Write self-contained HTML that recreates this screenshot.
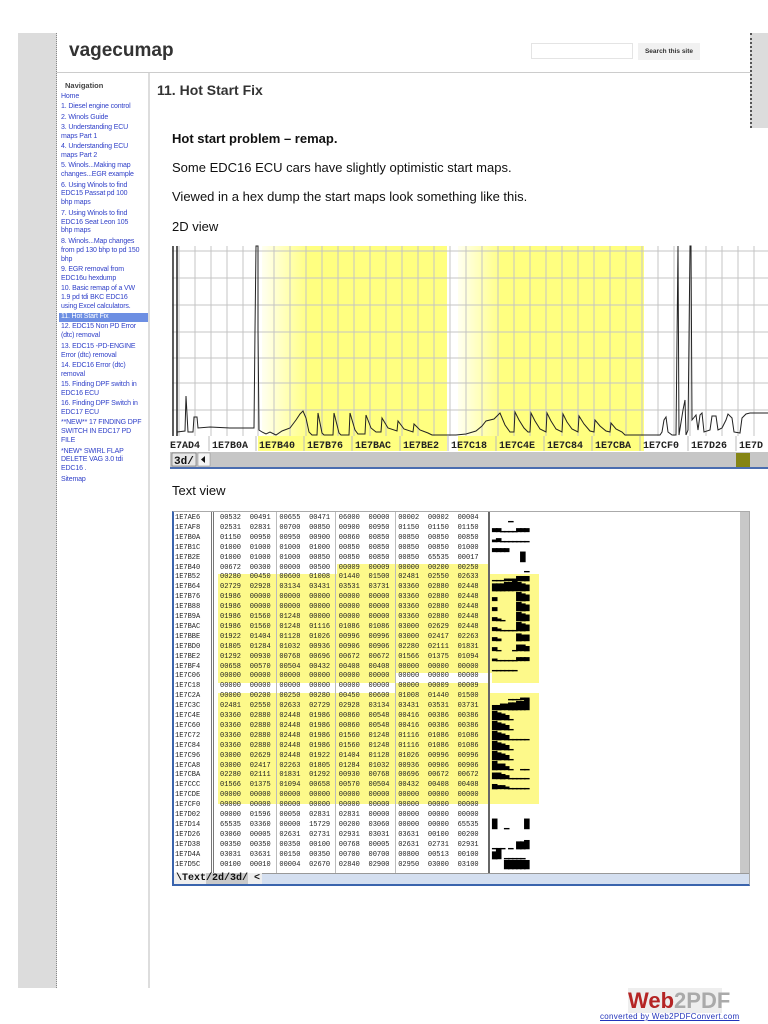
<!DOCTYPE html>
<html><head><meta charset="utf-8"><style>
*{margin:0;padding:0;box-sizing:border-box}
body{width:768px;height:1024px;background:#fff;position:relative;overflow:hidden;font-family:"Liberation Sans",sans-serif}
.abs{position:absolute}
#lg{left:18px;top:33px;width:39px;height:955px;background:#dcdcdc;border-right:1px dotted #888}
#rg{left:750px;top:33px;width:18px;height:95px;background:#dcdcdc;border-left:2px dotted #555}
#title{left:69px;top:40px;font-size:19px;font-weight:bold;color:#333}
#hline{left:57px;top:72px;width:693px;height:1px;background:#ccc}
#sbox{left:531px;top:43px;width:102px;height:16px;border:1px solid #e4e4e4;background:#fff}
#sbtn{left:638px;top:43px;width:62px;height:17px;background:#f1f1f1;font-size:6.5px;font-weight:bold;color:#333;text-align:center;line-height:17px}
#vline{left:148px;top:73px;width:2px;height:915px;background:#ddd}
#nav{left:61px;top:81px;width:87px;font-size:7px;color:#2f3fc8;letter-spacing:-0.15px}
#nav .h{color:#444;font-weight:bold;font-size:7.5px;margin-bottom:3px;padding-left:4px;letter-spacing:0}
#nav div.i{line-height:8.9px;margin-bottom:1.4px;white-space:nowrap}
#nav div.sel{background:#6d8fe3;color:#fff;margin-left:-2px;padding-left:2px}
h1{position:absolute;left:157px;top:82px;font-size:14px;color:#333;font-weight:bold}
.p{position:absolute;left:172px;font-size:13px;color:#111;white-space:nowrap}
#tv{left:172px;top:511px;width:578px;height:375px;border:1px solid #aaa;border-bottom:2px solid #3a64ad;border-left:2px solid #3a64ad;background:#fff;overflow:hidden}
.r{position:absolute;left:0;height:9.9px;width:570px;font-family:"Liberation Mono",monospace;font-size:7px;line-height:9.9px;color:#222}
.r span{position:absolute}
.a{left:1px}
.m{left:318px;font-family:"DejaVu Sans Mono",monospace;font-size:9px;letter-spacing:-1.4px;color:#000;white-space:pre}
.y{position:absolute;background:#fdf98a}
</style></head><body>
<div class="abs" id="lg"></div>
<div class="abs" id="rg"></div>
<div class="abs" id="title">vagecumap</div>
<div class="abs" id="hline"></div>
<div class="abs" id="sbox"></div>
<div class="abs" id="sbtn">Search this site</div>
<div class="abs" id="vline"></div>
<div class="abs" id="nav">
<div class="h">Navigation</div>
<div class="i">Home</div>
<div class="i">1. Diesel engine control</div>
<div class="i">2. Winols Guide</div>
<div class="i">3. Understanding ECU<br>maps Part 1</div>
<div class="i">4. Understanding ECU<br>maps Part 2</div>
<div class="i">5. Winols...Making map<br>changes...EGR example</div>
<div class="i">6. Using Winols to find<br>EDC15 Passat pd 100<br>bhp maps</div>
<div class="i">7. Using Winols to find<br>EDC16 Seat Leon 105<br>bhp maps</div>
<div class="i">8. Winols...Map changes<br>from pd 130 bhp to pd 150<br>bhp</div>
<div class="i">9. EGR removal from<br>EDC16u hexdump</div>
<div class="i">10. Basic remap of a VW<br>1.9 pd tdi BKC EDC16<br>using Excel calculators.</div>
<div class="i sel">11. Hot Start Fix</div>
<div class="i">12. EDC15 Non PD Error<br>(dtc) removal</div>
<div class="i">13. EDC15 -PD-ENGINE<br>Error (dtc) removal</div>
<div class="i">14. EDC16 Error (dtc)<br>removal</div>
<div class="i">15. Finding DPF switch in<br>EDC16 ECU</div>
<div class="i">16. Finding DPF Switch in<br>EDC17 ECU</div>
<div class="i">**NEW** 17 FINDING DPF<br>SWITCH IN EDC17 PD<br>FILE</div>
<div class="i">*NEW* SWIRL FLAP<br>DELETE VAG 3.0 tdi<br>EDC16 .</div>
<div class="i">Sitemap</div>
</div>
<h1>11. Hot Start Fix</h1>
<div class="p" style="top:131px;font-weight:bold">Hot start problem – remap.</div>
<div class="p" style="top:160px">Some EDC16 ECU cars have slightly optimistic start maps.</div>
<div class="p" style="top:189px">Viewed in a hex dump the start maps look something like this.</div>
<div class="p" style="top:219px">2D view</div>
<div class="p" style="top:483px">Text view</div>

<svg class="abs" style="left:170px;top:240px" width="598" height="230" viewBox="170 240 598 230">
<defs>
<linearGradient id="g1" x1="0" x2="1"><stop offset="0" stop-color="#fffff0"/><stop offset="1" stop-color="#ffff88"/></linearGradient>
</defs>
<rect x="170" y="240" width="598" height="230" fill="#fff"/>
<rect x="262" y="246" width="44" height="205" fill="url(#g1)"/>
<rect x="306" y="246" width="141" height="205" fill="#ffff80"/>
<rect x="458" y="246" width="42" height="205" fill="url(#g1)"/>
<rect x="500" y="246" width="144" height="205" fill="#ffff80"/>
<g stroke="#c4c4c4" stroke-width="1">
<path d="M179 246V436M195 246V436M211 246V436M227 246V436M243 246V436M258 246V436M274 246V436M290 246V436M306 246V436M322 246V436M338 246V436M354 246V436M370 246V436M386 246V436M402 246V436M418 246V436M434 246V436M450 246V436M466 246V436M482 246V436M498 246V436M514 246V436M530 246V436M546 246V436M562 246V436M578 246V436M594 246V436M610 246V436M626 246V436M642 246V436M658 246V436M674 246V436M690 246V436M706 246V436M722 246V436M738 246V436M754 246V436"/>
<path d="M172 251H768M172 278H768M172 305H768M172 332H768M172 358H768M172 383H768M172 410H768"/>
</g>
<path d="M173 246V436M177 246V436" stroke="#333" stroke-width="1.6"/>
<polyline fill="none" stroke="#222" stroke-width="1" points="177,432 185,431 186,396 188,432 193,432 194,417 197,417 198,428 210,427 230,428 254,428 255,330 256,246 258,246 258,330 259,430 262,432 266,434 270,432 276,435 282,431 290,428 296,420 300,414 303,411 306,418 309,432 312,435 317,435 318,413 322,433 324,435 333,435 334,413 339,433 341,435 349,435 350,413 355,430 358,434 365,434 366,415 371,428 376,432 381,432 382,418 388,428 397,431 398,421 404,429 413,432 414,424 420,430 428,433 432,435 456,435 466,434 476,431 482,426 486,421 494,419 500,413 505,425 510,432 514,432 515,412 519,420 524,428 528,432 530,432 531,413 535,421 540,429 546,432 547,413 551,421 556,429 562,432 563,414 567,422 572,429 578,432 579,416 584,424 590,431 594,432 595,420 600,426 606,431 610,432 611,423 616,429 622,432 625,435 660,435 662,432 664,420 666,417 668,432 672,435 676,435 678,246 679,435 683,410 685,400 686,435 688,430 690,246 691,246 692,420 696,415 698,430 700,415 702,413 704,432 710,430 712,416 716,416 718,430 722,428 726,420 728,414 732,418 734,432 740,433 742,418 746,414 750,413 768,413"/>
<rect x="170" y="436" width="598" height="15" fill="#fff"/>
<rect x="258" y="436" width="189" height="15" fill="#ffff80"/>
<rect x="458" y="436" width="186" height="15" fill="#ffff80"/>
<g stroke="#bbb"><path d="M209 436V451M256 436V451M304 436V451M352 436V451M400 436V451M448 436V451M496 436V451M544 436V451M592 436V451M640 436V451M688 436V451M736 436V451"/></g>
<g font-family="Liberation Mono,monospace" font-size="10" font-weight="bold" fill="#222">
<text x="170" y="448">E7AD4</text><text x="212" y="448">1E7B0A</text><text x="259" y="448">1E7B40</text><text x="307" y="448">1E7B76</text><text x="355" y="448">1E7BAC</text><text x="403" y="448">1E7BE2</text><text x="451" y="448">1E7C18</text><text x="499" y="448">1E7C4E</text><text x="547" y="448">1E7C84</text><text x="595" y="448">1E7CBA</text><text x="643" y="448">1E7CF0</text><text x="691" y="448">1E7D26</text><text x="739" y="448">1E7D</text>
</g>
<rect x="170" y="452" width="598" height="15" fill="#c6c6c6"/>
<rect x="172" y="453" width="24" height="13" fill="#e6e6e6" stroke="#666" stroke-width="0.6"/>
<text x="174" y="464" font-family="Liberation Mono,monospace" font-size="11" font-weight="bold" fill="#111">3d/</text>
<rect x="198" y="453" width="12" height="13" fill="#f4f4f4" stroke="#888" stroke-width="0.5"/>
<path d="M205 456L201 459.5L205 463Z" fill="#111"/>
<rect x="736" y="453" width="14" height="14" fill="#858514"/>
<rect x="170" y="467" width="598" height="2" fill="#4a6db0"/>
</svg>

<div class="abs" id="tv">
<div class="y" style="left:163px;top:52px;width:153px;height:10px"></div>
<div class="y" style="left:44px;top:62px;width:321px;height:99px"></div>
<div class="y" style="left:44px;top:161px;width:178px;height:10px"></div>
<div class="y" style="left:318px;top:161px;width:47px;height:10px"></div>
<div class="y" style="left:222px;top:171px;width:94px;height:10px"></div>
<div class="y" style="left:44px;top:181px;width:321px;height:111px"></div>
<div style="position:absolute;left:37px;top:0;width:3px;height:362px;border-left:1px solid #777;border-right:1px solid #777"></div>
<div style="position:absolute;left:102px;top:0;width:1px;height:362px;background:#bbb"></div>
<div style="position:absolute;left:161px;top:0;width:1px;height:362px;background:#bbb"></div>
<div style="position:absolute;left:221px;top:0;width:1px;height:362px;background:#bbb"></div>
<div style="position:absolute;left:314px;top:0;width:2px;height:362px;background:#666"></div>
<div style="position:absolute;left:566px;top:0;width:9px;height:362px;background:#c8c8c8"></div>
<div id="rows"></div>
<div style="position:absolute;left:0;top:361px;width:576px;height:12px;background:#d4dff0;border-top:1px solid #999"></div>
<div style="position:absolute;left:0;top:361px;font-family:'Liberation Mono',monospace;font-size:10px;font-weight:bold;color:#111;background:#eee;padding:0 2px;line-height:12px">\Text<span style="background:#c9c9c9">/2d/3d/</span> &lt;</div>
</div>

<div class="abs" style="left:628px;top:988px;width:94px;height:25px;background:#eee;font-size:22px;font-weight:bold;line-height:25px;text-align:center"><span style="color:#b52525">Web</span><span style="color:#aaa">2PDF</span></div>
<div class="abs" style="left:600px;top:1012px;font-size:8px;color:#2233bb;text-decoration:underline;white-space:nowrap;letter-spacing:0.3px">converted by Web2PDFConvert.com</div>

<script>
var d=[
["1E7AE6","00532 00491 00655 00471 06000 00000 00002 00002 00004","    ▁    "],
["1E7AF8","02531 02831 00700 00850 00900 00950 01150 01150 01150","▃▃▁▁▁▁▃▃▃"],
["1E7B0A","01150 00950 00950 00900 00860 00850 00850 00850 00850","▂▃▁▁▁▁▁▁▁"],
["1E7B1C","01000 01000 01000 01000 00850 00850 00850 00850 01000","▃▃▃▃     "],
["1E7B2E","01000 01000 01000 00850 00850 00850 00850 65535 00017","       █ "],
["1E7B40","00672 00300 00000 00500 00009 00009 00000 00200 00250","        ▁"],
["1E7B52","00280 00450 00600 01008 01440 01500 02481 02550 02633","▁▁▁▂▂▂▄▄▄"],
["1E7B64","02729 02928 03134 03431 03531 03731 03360 02880 02448","▆▆▆▇▇█▇▆▅"],
["1E7B76","01986 00000 00000 00000 00000 00000 03360 02880 02448","▃     ▇▆▅"],
["1E7B88","01986 00000 00000 00000 00000 00000 03360 02880 02448","▃     ▇▆▅"],
["1E7B9A","01986 01560 01248 00000 00000 00000 03360 02880 02448","▃▂▁   ▇▆▅"],
["1E7BAC","01986 01560 01248 01116 01086 01086 03000 02629 02448","▃▂▁▁▁▁▇▆▅"],
["1E7BBE","01922 01404 01128 01026 00996 00996 03000 02417 02263","▃▂    ▆▅▅"],
["1E7BD0","01805 01284 01032 00936 00906 00906 02280 02111 01831","▃▁   ▁▅▅▄"],
["1E7BE2","01292 00930 00768 00696 00672 00672 01566 01375 01094","▂▁▁▁▁▁▃▃▃"],
["1E7BF4","00658 00570 00504 00432 00408 00408 00000 00000 00000","▁▁▁▁▁▁   "],
["1E7C06","00000 00000 00000 00000 00000 00000 00000 00000 00000","         "],
["1E7C18","00000 00000 00000 00000 00000 00000 00000 00009 00009","         "],
["1E7C2A","00000 00200 00250 00280 00450 00600 01008 01440 01500","    ▁▁▁▂▂"],
["1E7C3C","02481 02550 02633 02729 02928 03134 03431 03531 03731","▄▄▅▅▆▆▇▇█"],
["1E7C4E","03360 02880 02448 01986 00860 00548 00416 00386 00386","▇▆▅▄▁    "],
["1E7C60","03360 02880 02448 01986 00860 00548 00416 00386 00386","▇▆▅▄▁    "],
["1E7C72","03360 02880 02448 01986 01560 01248 01116 01086 01086","▇▆▅▄▁▁▁▁▁"],
["1E7C84","03360 02880 02448 01986 01560 01248 01116 01086 01086","▇▆▅▄▁    "],
["1E7C96","03000 02629 02448 01922 01404 01128 01026 00996 00996","▇▆▅▄▁    "],
["1E7CA8","03000 02417 02263 01805 01284 01032 00936 00906 00906","▇▅▅▃▁  ▁▁"],
["1E7CBA","02280 02111 01831 01292 00930 00768 00696 00672 00672","▅▅▄▃▁▁▁▁▁"],
["1E7CCC","01566 01375 01094 00658 00570 00504 00432 00408 00408","▄▃▃▂▁▁▁▁▁"],
["1E7CDE","00000 00000 00000 00000 00000 00000 00000 00000 00000","         "],
["1E7CF0","00000 00000 00000 00000 00000 00000 00000 00000 00000","         "],
["1E7D02","00000 01596 00050 02831 02831 00000 00000 00000 00000","         "],
["1E7D14","65535 03360 00000 15729 00200 03060 00000 00000 65535","█  ▁    █"],
["1E7D26","03060 00005 02631 02731 02931 03031 03631 00100 00200","         "],
["1E7D38","00350 00350 00350 00100 00768 00005 02631 02731 02931","▁▁▁ ▁ ▆▆▇"],
["1E7D4A","03031 03631 00150 00350 00700 00700 00800 00513 00100","▆█ ▁▁▁▁▁ "],
["1E7D5C","00100 00010 00004 02670 02840 02900 02950 03000 03100","   ▇▇▇▇▇▇"]];
var h="";
for(var i=0;i<d.length;i++){
var v=d[i][1].split(" ");
h+='<div class="r" style="top:'+(2+i*9.9).toFixed(1)+'px"><span class="a">'+d[i][0]+'</span>';
for(var j=0;j<9;j++){h+='<span style="left:'+(46+j*29.7).toFixed(1)+'px">'+v[j]+'</span>';}
h+='<span class="m">'+d[i][2]+'</span></div>';
}
document.getElementById("rows").innerHTML=h;
</script>
</body></html>
